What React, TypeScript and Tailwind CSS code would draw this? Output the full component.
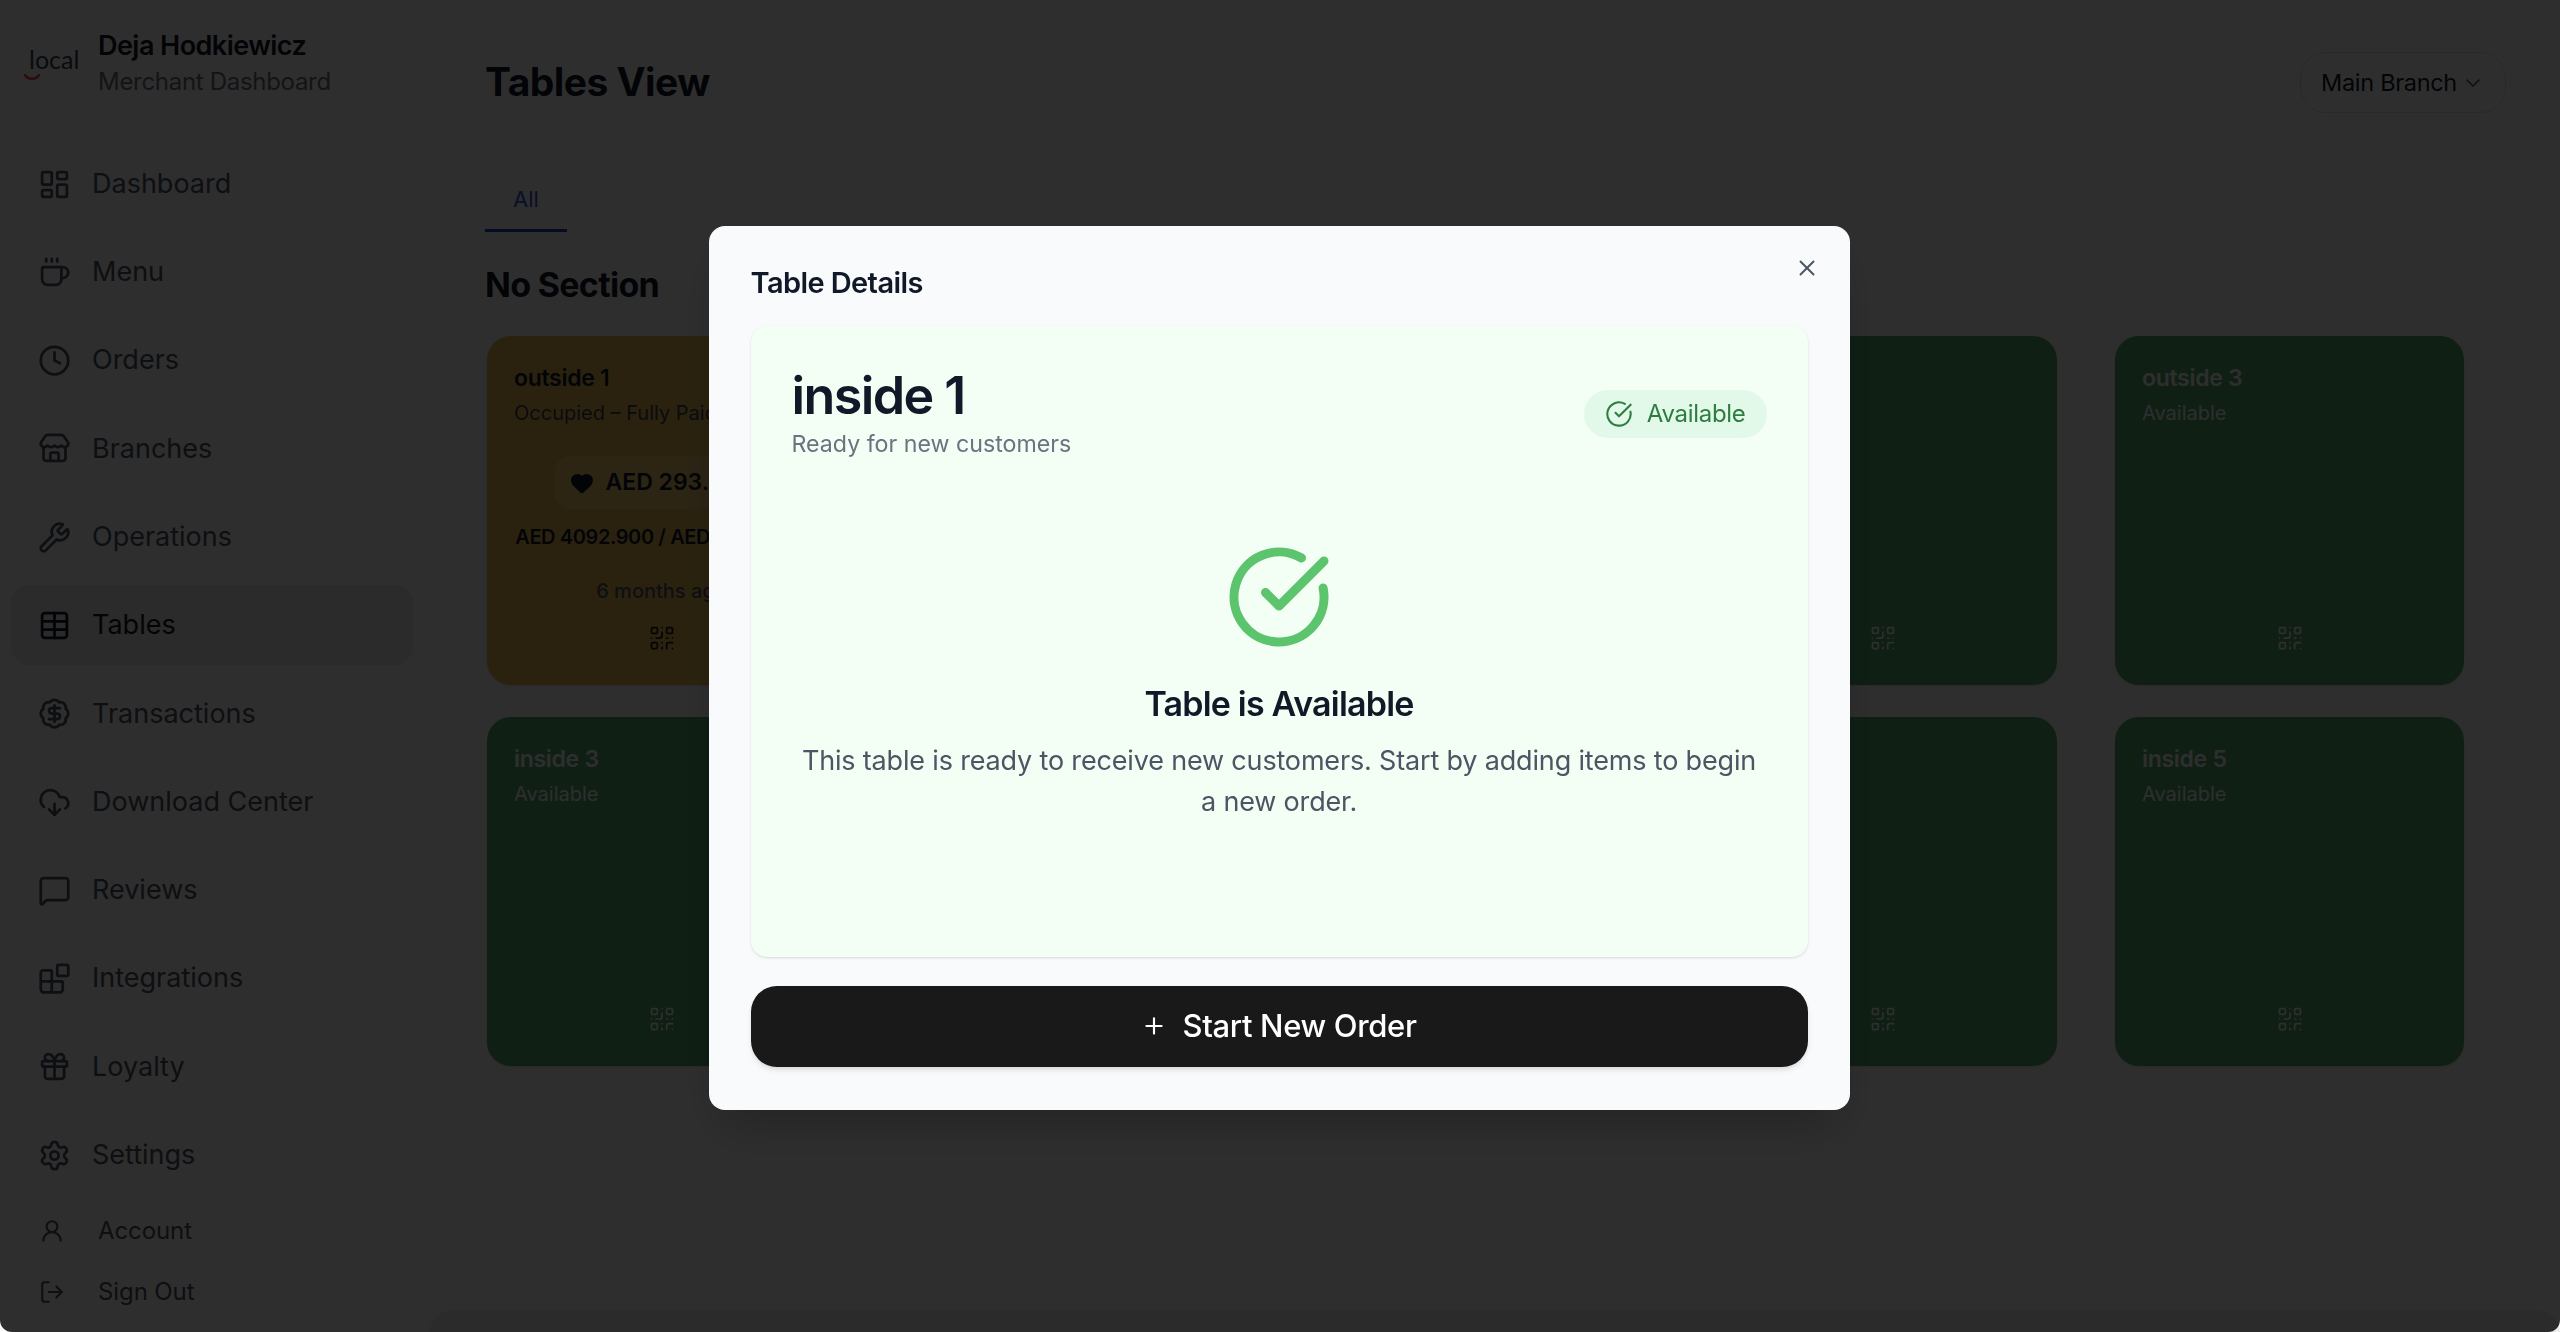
import {
  BadgeDollarSign, Blocks, ChevronDown, CircleCheckBig, Clock, CloudDownload, Coffee, Gift, Heart,
  LayoutDashboard, LogOut, MessageSquare, Plus, QrCode, Settings, Store, Table, UserRound, Wrench, X,
} from 'lucide-react';

const NAV = [
  { label: 'Dashboard', icon: LayoutDashboard },
  { label: 'Menu', icon: Coffee },
  { label: 'Orders', icon: Clock },
  { label: 'Branches', icon: Store },
  { label: 'Operations', icon: Wrench },
  { label: 'Tables', icon: Table, active: true },
  { label: 'Transactions', icon: BadgeDollarSign },
  { label: 'Download Center', icon: CloudDownload },
  { label: 'Reviews', icon: MessageSquare },
  { label: 'Integrations', icon: Blocks },
  { label: 'Loyalty', icon: Gift },
  { label: 'Settings', icon: Settings },
];

const TABLES = [
  { name: 'outside 1', occupied: true },
  { name: 'inside 1' },
  { name: 'inside 2' },
  { name: 'outside 2' },
  { name: 'outside 3' },
  { name: 'inside 3' },
  { name: 'outside 4' },
  { name: 'inside 4' },
  { name: 'outside 5' },
  { name: 'inside 5' },
];

function Logo() {
  return (
    <div className="relative w-[52px] h-[40px] shrink-0">
      <span className="absolute left-[0px] top-[0px] text-[25px] leading-[30px] font-[Lato,sans-serif] text-[#374151]">local</span>
      <svg className="absolute left-[-6px] top-[29px]" width="20" height="10" viewBox="0 0 20 10" fill="none">
        <path d="M2 2c3 5 11 5 14 0" stroke="#ef4444" strokeWidth="2.5" strokeLinecap="round" />
      </svg>
    </div>
  );
}

function Sidebar() {
  return (
    <aside className="w-[430px] shrink-0 h-full flex flex-col border-r border-[#f3f4f6] bg-white">
      <div className="h-[128px] shrink-0 flex items-center pl-[29px] gap-[17px] border-b border-[#f3f4f6]">
        <Logo />
        <div>
          <div className="text-[27px] leading-[36px] font-semibold tracking-[-0.55px] text-[#111827]">Deja Hodkiewicz</div>
          <div className="text-[24px] leading-[36px] tracking-[-0.3px] text-[#6b7280]">Merchant Dashboard</div>
        </div>
      </div>
      <nav className="flex flex-col gap-[8.3px] pl-[10px] pr-[15px] pt-[16px]">
        {NAV.map(({ label, icon: Icon, active }) => (
          <div
            key={label}
            className={`h-[80px] flex items-center pl-[28px] gap-[21px] rounded-[20px] text-[27px] ${active ? 'bg-[#ebebeb] text-[#111827]' : 'text-[#4b5563]'}`}
          >
            <Icon size={33} />
            <span>{label}</span>
          </div>
        ))}
      </nav>
      <div className="mt-[-10px] flex-1 border-t border-[#f3f4f6] pt-[25px] pl-[39px] flex flex-col gap-[21px] text-[24px] text-[#4b5563]">
        <div className="h-[40px] flex items-center gap-[33px]">
          <UserRound size={26} />
          <span className="tracking-[-0.1px]">Account</span>
        </div>
        <div className="h-[40px] flex items-center gap-[33px]">
          <LogOut size={26} />
          <span className="tracking-[-0.1px]">Sign Out</span>
        </div>
      </div>
    </aside>
  );
}

function TableCard({ name, occupied }: { name: string; occupied?: boolean }) {
  return (
    <div
      className={`h-[349px] rounded-[24px] pt-[27px] px-[27px] pb-[33px] flex flex-col shadow-sm ${occupied ? 'bg-[#e6be55] text-[#111827]' : 'bg-[#53ac6f] text-white'}`}
    >
      <div className="text-[23px] leading-[30px] font-semibold tracking-[-0.3px]">{name}</div>
      <div className={`mt-[5px] text-[20px] leading-[30px] ${occupied ? 'text-[#374151]' : 'text-white'}`}>
        {occupied ? 'Occupied – Fully Paid' : 'Available'}
      </div>
      {occupied && (
        <div className="flex flex-col items-center">
          <div className="mt-[28px] h-[53px] w-[216px] rounded-[18px] bg-[#f0cc70] flex items-center justify-center gap-[12px] text-[23px] font-semibold">
            <Heart size={24} fill="currentColor" />
            <span>AED 293.300</span>
          </div>
          <div className="mt-[13px] text-[20px] leading-[30px] font-semibold tracking-[-0.4px] whitespace-nowrap">AED 4092.900 / AED 4386.200</div>
          <div className="mt-[24px] text-[20px] leading-[30px] font-medium text-[#4b5563]">6 months ago</div>
        </div>
      )}
      <div className="mt-auto flex justify-center">
        <QrCode size={28} strokeWidth={1.5} />
      </div>
    </div>
  );
}

function MainContent() {
  return (
    <main className="flex-1 h-full flex flex-col bg-white min-w-0">
      <div className="flex-1 pl-[55px] pr-[54px] pt-[52px]">
        <div className="flex items-center justify-between h-[61px]">
          <h1 className="text-[39px] font-bold tracking-[-0.55px] text-[#111827]">Tables View</h1>
          <div className="h-[61px] w-[206px] rounded-[26px] border-[1.5px] border-[#dfdfdf] flex items-center justify-center gap-[4px] text-[23.5px] tracking-[-0.3px] text-[#111827]">
            Main Branch
            <ChevronDown size={24} strokeWidth={1.6} className="text-[#4b5563]" />
          </div>
        </div>
        <div className="mt-[60px] w-[82px] h-[59px] pb-[3px] border-b-[3px] border-[#1e40af] flex items-center justify-center text-[22px] text-[#3358d4]">
          All
        </div>
        <h2 className="mt-[31px] h-[44px] text-[34px] leading-[44px] font-bold tracking-[-0.7px] text-[#111827]">No Section</h2>
        <div className="mt-[29px] ml-[2px] grid grid-cols-[repeat(5,349px)] gap-x-[58px] gap-y-[32px]">
          {TABLES.map((t) => (
            <TableCard key={t.name} name={t.name} occupied={t.occupied} />
          ))}
        </div>
      </div>
      <div className="h-[22px] shrink-0 rounded-t-[24px] bg-[#ececec]" />
    </main>
  );
}

function TableDetailsModal() {
  return (
    <div className="fixed inset-0 z-50 rounded-b-[12px] bg-black/[0.82] backdrop-blur-[0.6px] flex items-center justify-center pt-[3px] pr-[2px]">
      <div className="relative w-[1141px] h-[884px] rounded-[16px] bg-[#f9fafc] px-[42px] shadow-2xl flex flex-col">
        <button className="absolute right-[30px] top-[29px] text-[#4b5563]">
          <X size={26} strokeWidth={1.8} />
        </button>
        <h2 className="pt-[38px] h-[100px] text-[29px] leading-[38px] font-semibold tracking-[-0.6px] text-[#111827]">Table Details</h2>
        <div className="h-[631px] rounded-[16px] bg-[#f3fef5] shadow-sm px-[41px] pt-[39px]">
          <div className="flex items-start justify-between">
            <div>
              <div className="text-[52px] leading-[62px] font-semibold tracking-[-1.6px] text-[#111827]">inside 1</div>
              <div className="mt-[1px] text-[23.2px] leading-[32px] text-[#6b7280]">Ready for new customers</div>
            </div>
            <div className="mt-[25px] h-[48px] rounded-full bg-[#e2f9ea] pl-[21px] pr-[21px] flex items-center gap-[14px] text-[24px] tracking-[-0.3px] text-[#2e7d40]">
              <CircleCheckBig size={28} strokeWidth={1.8} />
              Available
            </div>
          </div>
          <div className="mt-[83px] flex flex-col items-center text-center">
            <CircleCheckBig size={108} strokeWidth={2} className="text-[#5cc46c]" />
            <div className="mt-[30px] text-[34px] leading-[46px] font-semibold tracking-[-0.8px] text-[#111827]">Table is Available</div>
            <p className="mt-[13px] w-[970px] text-[27px] leading-[41px] tracking-[-0.17px] text-[#4b5563]">
              This table is ready to receive new customers. Start by adding items to begin a new order.
            </p>
          </div>
        </div>
        <button className="mt-[29px] h-[81px] rounded-[26px] bg-[#191919] shadow-md text-white flex items-center justify-center gap-[15px] text-[31px] font-medium tracking-[-0.35px]">
          <Plus size={26} strokeWidth={2} />
          Start New Order
        </button>
      </div>
    </div>
  );
}

export default function App() {
  return (
    <div className="h-screen w-full flex overflow-hidden font-[Inter,sans-serif] bg-white">
      <Sidebar />
      <MainContent />
      <TableDetailsModal />
    </div>
  );
}
